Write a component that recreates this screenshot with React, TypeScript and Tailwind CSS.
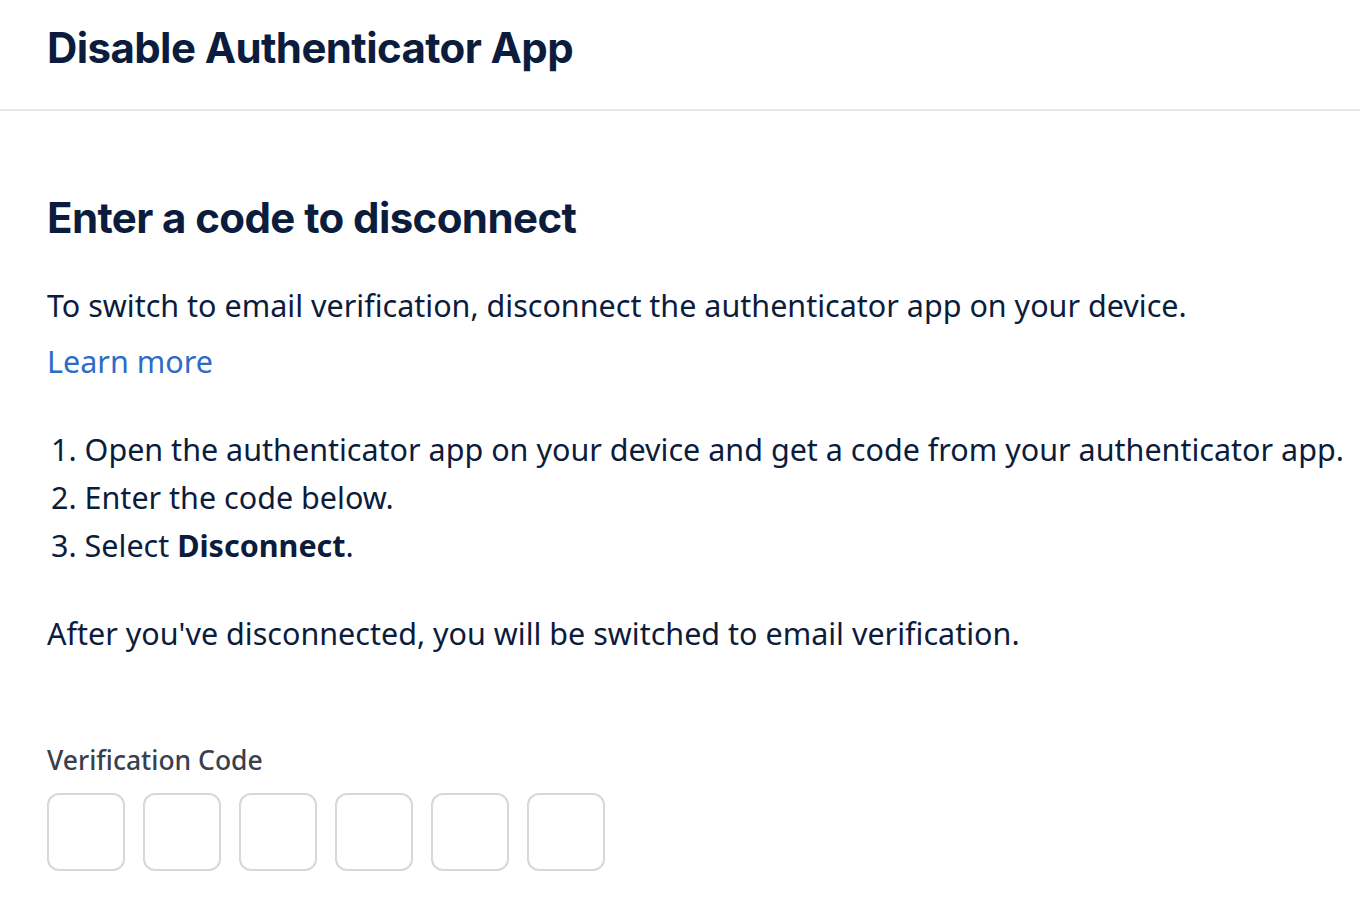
export default function App() {
  const boxes = [0, 1, 2, 3, 4, 5]
  return (
    <div className="min-h-screen bg-white text-[#0c1c3c]" style={{ fontFamily: '"Noto Sans", sans-serif' }}>
      <header className="h-[111px] pt-[26px] pl-[47px] border-b-2 border-[#e7e7ec]">
        <h1 className="text-[42px] leading-[44px] font-bold tracking-[-0.6px] font-['Inter',sans-serif]">
          Disable Authenticator App
        </h1>
      </header>
      <main className="pl-[47px] pt-[79px]">
        <h2 className="text-[42px] leading-[56px] font-bold tracking-[-0.6px] font-['Inter',sans-serif]">
          Enter a code to disconnect
        </h2>
        <p className="mt-[35px] text-[30.5px] leading-[48px]">
          To switch to email verification, disconnect the authenticator app on your device.
        </p>
        <a href="#" className="block mt-[8px] text-[30.5px] leading-[48px] text-[#2e6bc6]">
          Learn more
        </a>
        <ol className="mt-[40px] text-[30.5px] leading-[48px] list-decimal list-inside pl-[4px] whitespace-nowrap">
          <li>Open the authenticator app on your device and get a code from your authenticator app.</li>
          <li>Enter the code below.</li>
          <li>
            Select <span className="font-bold">Disconnect</span>.
          </li>
        </ol>
        <p className="mt-[40px] text-[30.5px] leading-[48px]">
          After you've disconnected, you will be switched to email verification.
        </p>
        <label className="block mt-[83px] text-[26.5px] leading-[40px] font-medium text-[#383f4d]">
          Verification Code
        </label>
        <div className="mt-[13px] flex gap-[18px]">
          {boxes.map((i) => (
            <input
              key={i}
              type="text"
              maxLength={1}
              className="w-[78px] h-[78px] rounded-[12px] border-2 border-[#d5d8dd] text-center text-[30px] outline-none"
            />
          ))}
        </div>
      </main>
    </div>
  )
}
